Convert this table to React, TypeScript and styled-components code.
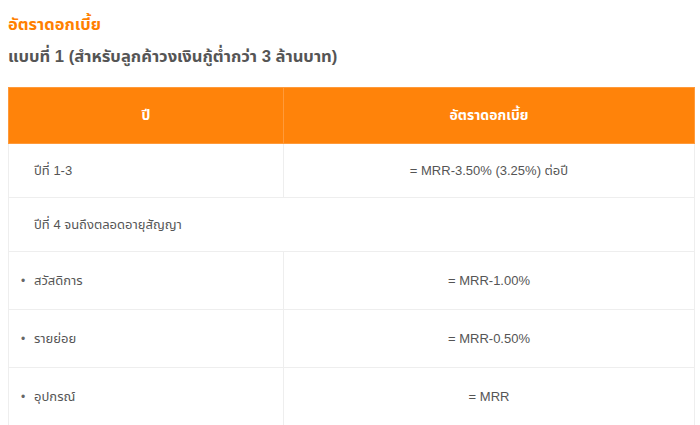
import styled, { createGlobalStyle } from "styled-components";

const GlobalStyle = createGlobalStyle`
  html, body {
    margin: 0;
    padding: 0;
    background: #ffffff;
  }
  body {
    font-family: Tahoma, "Liberation Sans", "Noto Sans Thai", "Noto Sans", sans-serif;
    color: #555555;
  }
`;

type Row = {
  label: string;
  rate?: string;
  bullet?: boolean;
  span?: boolean;
  tall?: boolean;
};

const rows: Row[] = [
  { label: "ปีที่ 1-3", rate: "= MRR-3.50% (3.25%) ต่อปี" },
  { label: "ปีที่ 4 จนถึงตลอดอายุสัญญา", span: true },
  { label: "สวัสดิการ", rate: "= MRR-1.00%", bullet: true, tall: true },
  { label: "รายย่อย", rate: "= MRR-0.50%", bullet: true, tall: true },
  { label: "อุปกรณ์", rate: "= MRR", bullet: true, tall: true },
];

export default function App() {
  return (
    <>
      <GlobalStyle />
      <Page>
        <Title>อัตราดอกเบี้ย</Title>
        <Subtitle>แบบที่ 1 (สำหรับลูกค้าวงเงินกู้ต่ำกว่า 3 ล้านบาท)</Subtitle>
        <Table>
          <thead>
            <tr>
              <HeadCell>ปี</HeadCell>
              <HeadCell>อัตราดอกเบี้ย</HeadCell>
            </tr>
          </thead>
          <tbody>
            {rows.map((r) =>
              r.span ? (
                <BodyRow key={r.label} $tall={r.tall}>
                  <LabelCell colSpan={2}>{r.label}</LabelCell>
                </BodyRow>
              ) : (
                <BodyRow key={r.label} $tall={r.tall}>
                  <LabelCell $bullet={r.bullet}>
                    {r.bullet && <Dot>•</Dot>}
                    {r.label}
                  </LabelCell>
                  <RateCell>{r.rate}</RateCell>
                </BodyRow>
              )
            )}
          </tbody>
        </Table>
      </Page>
    </>
  );
}

const Page = styled.div`
  width: 700px;
  height: 425px;
  overflow: hidden;
  padding: 13px 0 0 8px;
  box-sizing: border-box;
`;

const Title = styled.h2`
  margin: 0;
  font-size: 16.5px;
  line-height: 22px;
  font-weight: bold;
  color: #ff7f00;
`;

const Subtitle = styled.h3`
  margin: 12px 0 0;
  font-size: 16.6px;
  line-height: 20px;
  font-weight: bold;
  color: #555555;
`;

const Table = styled.table`
  margin-top: 20px;
  width: 687px;
  border-collapse: collapse;
  table-layout: fixed;
  font-size: 13px;
  color: #555555;
`;

const HeadCell = styled.th`
  height: 55px;
  padding: 0;
  background: #ff830a;
  border: 1px solid #ff9a3a;
  color: #ffffff;
  font-size: 14px;
  font-weight: bold;
  text-align: center;

  &:first-child {
    width: 274px;
  }
`;

const BodyRow = styled.tr<{ $tall?: boolean }>`
  height: ${(p) => (p.$tall ? 58 : 54)}px;
`;

const LabelCell = styled.td<{ $bullet?: boolean }>`
  border: 1px solid #eeeeee;
  padding: 0 0 0 ${(p) => (p.$bullet ? 12 : 25)}px;
  vertical-align: middle;
  white-space: nowrap;
`;

const Dot = styled.span`
  display: inline-block;
  width: 13px;
  font-size: 12px;
  color: #666666;
`;

const RateCell = styled.td`
  border: 1px solid #eeeeee;
  padding: 0;
  text-align: center;
  vertical-align: middle;
`;
